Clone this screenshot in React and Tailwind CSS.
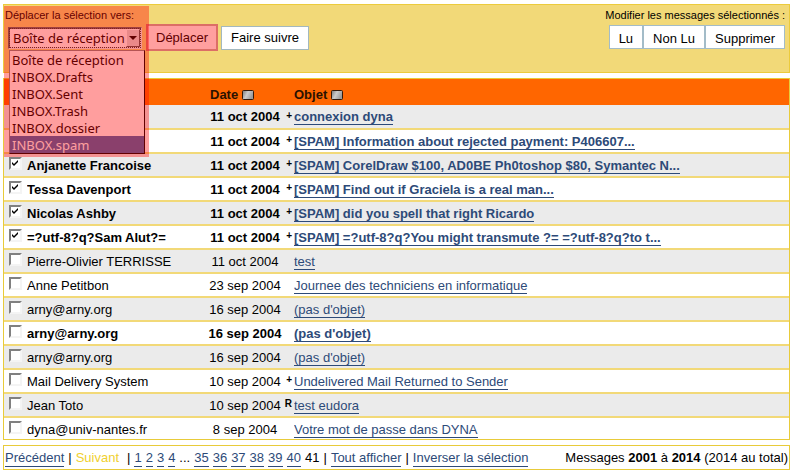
import { useState } from "react";
import clsx from "clsx";

const FOLDERS = [
  "Boîte de réception",
  "INBOX.Drafts",
  "INBOX.Sent",
  "INBOX.Trash",
  "INBOX.dossier",
  "INBOX.spam",
];

const MESSAGES = [
  { id: 1, from: "", date: "11 oct 2004", flag: "+", subject: "connexion dyna", unread: true },
  { id: 2, from: "", date: "11 oct 2004", flag: "+", subject: "[SPAM] Information about rejected payment: P406607...", unread: true },
  { id: 3, from: "Anjanette Francoise", date: "11 oct 2004", flag: "+", subject: "[SPAM] CorelDraw $100, AD0BE Ph0toshop $80, Symantec N...", unread: true },
  { id: 4, from: "Tessa Davenport", date: "11 oct 2004", flag: "+", subject: "[SPAM] Find out if Graciela is a real man...", unread: true },
  { id: 5, from: "Nicolas Ashby", date: "11 oct 2004", flag: "+", subject: "[SPAM] did you spell that right Ricardo", unread: true },
  { id: 6, from: "=?utf-8?q?Sam Alut?=", date: "11 oct 2004", flag: "+", subject: "[SPAM] =?utf-8?q?You might transmute ?= =?utf-8?q?to t...", unread: true },
  { id: 7, from: "Pierre-Olivier TERRISSE", date: "11 oct 2004", flag: "", subject: "test", unread: false },
  { id: 8, from: "Anne Petitbon", date: "23 sep 2004", flag: "", subject: "Journee des techniciens en informatique", unread: false },
  { id: 9, from: "arny@arny.org", date: "16 sep 2004", flag: "", subject: "(pas d'objet)", unread: false },
  { id: 10, from: "arny@arny.org", date: "16 sep 2004", flag: "", subject: "(pas d'objet)", unread: true },
  { id: 11, from: "arny@arny.org", date: "16 sep 2004", flag: "", subject: "(pas d'objet)", unread: false },
  { id: 12, from: "Mail Delivery System", date: "10 sep 2004", flag: "+", subject: "Undelivered Mail Returned to Sender", unread: false },
  { id: 13, from: "Jean Toto", date: "10 sep 2004", flag: "R", subject: "test eudora", unread: false },
  { id: 14, from: "dyna@univ-nantes.fr", date: "8 sep 2004", flag: "", subject: "Votre mot de passe dans DYNA", unread: false },
];

const PageLink = ({ children }) => (
  <a href="#" className="border-b border-[#2d4a78] text-[#2d4a78]">
    {children}
  </a>
);

const SortButton = ({ label }) => (
  <button type="button" aria-label={label} className="flex">
    <svg width="12" height="10" viewBox="0 0 12 10">
      <defs>
        <linearGradient id="sortFill" x1="0" y1="0" x2="1" y2="0.4">
          <stop offset="0" stopColor="#777" />
          <stop offset="0.5" stopColor="#ccc" />
          <stop offset="1" stopColor="#999" />
        </linearGradient>
      </defs>
      <rect x="0.5" y="0.5" width="11" height="9" rx="1" fill="url(#sortFill)" stroke="#33190a" />
    </svg>
  </button>
);

const MessageCheckbox = ({ checked, onChange, label }) => (
  <span className="grid size-[13px]">
    <input
      type="checkbox"
      aria-label={label}
      checked={checked}
      onChange={onChange}
      className="col-start-1 row-start-1 size-[13px] appearance-none border-2 border-t-[#808080] border-r-[#f4f4f4] border-b-[#f4f4f4] border-l-[#808080] bg-white"
    />
    {checked && (
      <svg className="pointer-events-none col-start-1 row-start-1" width="13" height="13" viewBox="0 0 13 13">
        <path d="M3 5v2l2 2 4-4V3L5 7z" fill="#000" />
      </svg>
    )}
  </span>
);

const MoveForm = () => {
  const [folder, setFolder] = useState(FOLDERS[0]);
  const [active, setActive] = useState("INBOX.spam");

  return (
    <form className="relative flex flex-col" onSubmit={(e) => e.preventDefault()}>
      <label htmlFor="folder" className="px-px pt-px text-[11px] leading-[18px]">
        Déplacer la sélection vers:
      </label>
      <div className="flex items-center gap-[3px] pl-1">
        <div className="relative mr-px w-[134px]">
          <div className="grid">
            <select
              id="folder"
              value={folder}
              onChange={(e) => setFolder(e.target.value)}
              className="col-start-1 row-start-1 h-[22px] w-full appearance-none border-2 border-t-[#666] border-r-[#eee] border-b-[#eee] border-l-[#666] bg-white pl-[3px] font-['Noto_Sans',sans-serif] text-[13px] leading-4 outline-1 -outline-offset-2 outline-dotted outline-[#333]"
            >
              {FOLDERS.map((name) => (
                <option key={name}>{name}</option>
              ))}
            </select>
            <span className="pointer-events-none col-start-1 row-start-1 m-[2px] flex w-[14px] items-center justify-center justify-self-end border border-t-white border-r-[#555] border-b-[#555] border-l-white bg-[#ddd]">
              <svg width="8" height="4" viewBox="0 0 8 4">
                <path d="M0 0h8L4 4z" fill="#000" />
              </svg>
            </span>
          </div>
          <ul
            role="listbox"
            className="absolute top-full left-px z-10 mt-px w-[136px] border border-t-[#888] border-r-black border-b-black border-l-[#888] bg-white font-['Noto_Sans',sans-serif] text-[13px]"
          >
            {FOLDERS.map((name) => (
              <li
                key={name}
                role="option"
                aria-selected={name === active}
                onMouseEnter={() => setActive(name)}
                onClick={() => setFolder(name)}
                className={clsx("h-[17px] pl-[2px] leading-[18px]", name === active && "bg-[#4267ae] text-white")}
              >
                {name}
              </li>
            ))}
          </ul>
        </div>
        <button type="submit" className="h-[27px] border-2 border-[#dc6e66] bg-[#ff9f9f] px-2 pt-px text-[#610000]">
          Déplacer
        </button>
        <button type="button" className="h-6 border border-[#a3b8bf] bg-white px-[9px] pt-px">
          Faire suivre
        </button>
      </div>
      {/* red highlight over the folder picker */}
      <div className="pointer-events-none absolute top-px left-0 z-20 h-[151px] w-[145px] bg-[#ff0000]/38" />
    </form>
  );
};

export default function App() {
  const [selected, setSelected] = useState([3, 4, 5, 6]);

  const toggle = (id) => {
    setSelected((prev) => (prev.includes(id) ? prev.filter((x) => x !== id) : [...prev, id]));
  };

  return (
    <div className="flex flex-col gap-[5px] bg-white pt-1 pr-[6px] pl-[3px] font-['Liberation_Sans',Arial,sans-serif] text-[13px] text-black">
      <header className="flex min-h-[69px] items-start justify-between border border-[#eccb3c] bg-[#f2d978]">
        <MoveForm />
        <div className="flex flex-col items-end pr-1">
          <span className="text-[11px] leading-5">Modifier les messages sélectionnés :</span>
          <div className="flex border border-[#a3bcc8] bg-[#a3bcc8]">
            <button type="button" className="h-[22px] bg-white px-[9px] pt-[3px]">Lu</button>
            <button type="button" className="ml-[2px] h-[22px] bg-white px-[9px] pt-[3px]">Non Lu</button>
            <button type="button" className="ml-[2px] h-[22px] bg-white px-[9px] pt-[3px]">Supprimer</button>
          </div>
        </div>
      </header>

      <main className="border border-[#e8cb3a]">
        <table className="w-full table-fixed border-collapse">
          <colgroup>
            <col className="w-[23px]" />
            <col className="w-[178px]" />
            <col className="w-[80px]" />
            <col className="w-[9px]" />
            <col />
          </colgroup>
          <thead>
            <tr className="h-[25px] bg-[#ff6600] text-[#2b1200]">
              <th />
              <th />
              <th className="pt-[6px] pl-[5px]">
                <div className="flex items-center gap-1">
                  Date <SortButton label="Trier par date" />
                </div>
              </th>
              <th />
              <th className="pt-[6px]">
                <div className="flex items-center gap-1">
                  Objet <SortButton label="Trier par objet" />
                </div>
              </th>
            </tr>
          </thead>
          <tbody>
            {MESSAGES.map((msg) => (
              <tr
                key={msg.id}
                className={clsx(
                  "h-6 border-b-2 border-[#f2d978] last:h-[22px] last:border-b-0 odd:bg-[#ebebeb]",
                  msg.unread && "font-bold"
                )}
              >
                <td className="pb-[2px] pl-[5px]">
                  <MessageCheckbox
                    label={msg.subject}
                    checked={selected.includes(msg.id)}
                    onChange={() => toggle(msg.id)}
                  />
                </td>
                <td className="truncate pt-[2px]">{msg.from}</td>
                <td className="pt-[2px] text-center whitespace-nowrap">{msg.date}</td>
                <td className="pr-[2px] pb-px text-right text-[10px] leading-4 font-bold">
                  <span className="flex justify-end">{msg.flag}</span>
                </td>
                <td className="truncate pt-[2px]">
                  <PageLink>{msg.subject}</PageLink>
                </td>
              </tr>
            ))}
          </tbody>
        </table>
      </main>

      <footer className="flex min-h-[25px] flex-wrap items-center justify-between border border-[#e8cb3a] px-px pt-px">
        <nav className="flex items-center gap-1 leading-4">
          <PageLink>Précédent</PageLink>
          <span>|</span>
          <span className="mr-1 text-[#f0d030]">Suivant</span>
          <span>|</span>
          {[1, 2, 3, 4].map((n) => (
            <PageLink key={n}>{n}</PageLink>
          ))}
          <span>...</span>
          {[35, 36, 37, 38, 39, 40].map((n) => (
            <PageLink key={n}>{n}</PageLink>
          ))}
          <span>41</span>
          <span>|</span>
          <PageLink>Tout afficher</PageLink>
          <span>|</span>
          <PageLink>Inverser la sélection</PageLink>
        </nav>
        <p>
          Messages <b>2001</b> à <b>2014</b> (2014 au total)
        </p>
      </footer>
    </div>
  );
}
